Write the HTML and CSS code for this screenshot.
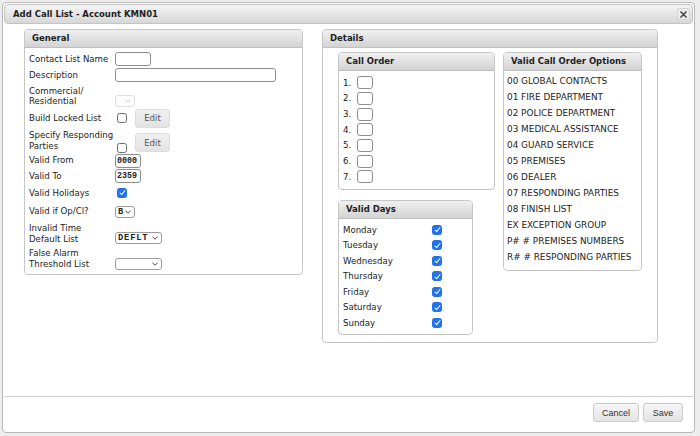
FILE: index.html
```html
<!DOCTYPE html>
<html>
    <head>
        <title>Add Call List - Account KMN01</title>
        <meta charset="UTF-8">
        <link rel="stylesheet" href="styles.css">
    </head>
    <body>
        <div class="dialog">
            <div class="titlebar">
                <span class="title">Add Call List - Account KMN01</span>
                <button type="button" class="close">
                    <svg width="7" height="7" viewBox="0 0 7 7"><path d="M1 1L6 6M6 1L1 6" stroke="#4a4a4a" stroke-width="1.7" stroke-linecap="round"/></svg>
                </button>
            </div>

            <div class="dialog-body">
                <!-- General -->
                <div class="panel general">
                    <div class="panel-head">General</div>
                    <div class="form">
                        <div class="row">
                            <label>Contact List Name</label>
                            <input type="text" class="txt w-name">
                        </div>
                        <div class="row">
                            <label>Description</label>
                            <input type="text" class="txt w-desc">
                        </div>
                        <div class="row two">
                            <label class="lh10">Commercial/<br>Residential</label>
                            <span class="select w-small disabled bottom1">
                                <select disabled><option></option></select>
                                <svg class="chev" width="6" height="4" viewBox="0 0 6 4"><path d="M0.5 0.8L3 3.2L5.5 0.8" fill="none" stroke="#c4c4c4" stroke-width="0.9"/></svg>
                            </span>
                        </div>
                        <div class="row btn-row">
                            <label>Build Locked List</label>
                            <input type="checkbox" class="check up">
                            <button type="button" class="edit">Edit</button>
                        </div>
                        <div class="row two">
                            <label>Specify Responding<br>Parties</label>
                            <input type="checkbox" class="check bottom2">
                            <button type="button" class="edit bottom1">Edit</button>
                        </div>
                        <div class="row short">
                            <label>Valid From</label>
                            <input type="text" class="txt mono w-time" value="0000">
                        </div>
                        <div class="row">
                            <label>Valid To</label>
                            <input type="text" class="txt mono w-time" value="2359">
                        </div>
                        <div class="row h18">
                            <label>Valid Holidays</label>
                            <input type="checkbox" class="check" checked>
                        </div>
                        <div class="row h19">
                            <label>Valid if Op/Cl?</label>
                            <span class="select w-small">
                                <select><option>B</option></select>
                                <svg class="chev" width="6" height="4" viewBox="0 0 6 4"><path d="M0.5 0.8L3 3.2L5.5 0.8" fill="none" stroke="#333" stroke-width="0.9"/></svg>
                            </span>
                        </div>
                        <div class="row two">
                            <label>Invalid Time<br>Default List</label>
                            <span class="select w-list bottom2">
                                <select><option>DEFLT</option></select>
                                <svg class="chev" width="6" height="4" viewBox="0 0 6 4"><path d="M0.5 0.8L3 3.2L5.5 0.8" fill="none" stroke="#333" stroke-width="0.9"/></svg>
                            </span>
                        </div>
                        <div class="row two">
                            <label>False Alarm<br>Threshold List</label>
                            <span class="select w-list bottom1">
                                <select><option></option></select>
                                <svg class="chev" width="6" height="4" viewBox="0 0 6 4"><path d="M0.5 0.8L3 3.2L5.5 0.8" fill="none" stroke="#333" stroke-width="0.9"/></svg>
                            </span>
                        </div>
                    </div>
                </div>

                <!-- Details -->
                <div class="panel details">
                    <div class="panel-head">Details</div>
                    <div class="details-body">
                        <div class="col">
                            <div class="panel call-order">
                                <div class="panel-head">Call Order</div>
                                <ol class="order-list">
                                    <li><span class="num">1.</span><input type="text" class="slot"></li>
                                    <li><span class="num">2.</span><input type="text" class="slot"></li>
                                    <li><span class="num">3.</span><input type="text" class="slot"></li>
                                    <li><span class="num">4.</span><input type="text" class="slot"></li>
                                    <li><span class="num">5.</span><input type="text" class="slot"></li>
                                    <li><span class="num">6.</span><input type="text" class="slot"></li>
                                    <li><span class="num">7.</span><input type="text" class="slot"></li>
                                </ol>
                            </div>
                            <div class="panel valid-days">
                                <div class="panel-head">Valid Days</div>
                                <div class="days">
                                    <label>Monday</label><input type="checkbox" class="check" checked>
                                    <label>Tuesday</label><input type="checkbox" class="check" checked>
                                    <label>Wednesday</label><input type="checkbox" class="check" checked>
                                    <label>Thursday</label><input type="checkbox" class="check" checked>
                                    <label>Friday</label><input type="checkbox" class="check" checked>
                                    <label>Saturday</label><input type="checkbox" class="check" checked>
                                    <label>Sunday</label><input type="checkbox" class="check" checked>
                                </div>
                            </div>
                        </div>
                        <div class="panel options">
                            <div class="panel-head">Valid Call Order Options</div>
                            <ul class="option-list">
                                <li>00 GLOBAL CONTACTS</li>
                                <li>01 FIRE DEPARTMENT</li>
                                <li>02 POLICE DEPARTMENT</li>
                                <li>03 MEDICAL ASSISTANCE</li>
                                <li>04 GUARD SERVICE</li>
                                <li>05 PREMISES</li>
                                <li>06 DEALER</li>
                                <li>07 RESPONDING PARTIES</li>
                                <li>08 FINISH LIST</li>
                                <li>EX EXCEPTION GROUP</li>
                                <li>P# # PREMISES NUMBERS</li>
                                <li>R# # RESPONDING PARTIES</li>
                            </ul>
                        </div>
                    </div>
                </div>
            </div>

            <div class="footer">
                <button type="button" class="action cancel">Cancel</button>
                <button type="button" class="action save">Save</button>
            </div>
        </div>
    </body>
</html>
```

FILE: styles.css
```css
body {
    margin: 0;
    background: #ededed;
    font-family: "DejaVu Sans", Verdana, sans-serif;
    font-size: 8.6px;
    color: #222;
}

.dialog {
    box-sizing: border-box;
    width: 693px;
    height: 431px;
    margin: 2px 0 0 2px;
    padding: 1px;
    border: 1px solid #b8b8b8;
    border-radius: 4px;
    background: #fff;
    display: flex;
    flex-direction: column;
}

.titlebar {
    box-sizing: border-box;
    height: 20px;
    padding: 0 2px 0 8px;
    border: 1px solid #c4c4c4;
    border-radius: 4px;
    background: linear-gradient(#f4f4f4, #d7d7d7);
    display: flex;
    align-items: center;
    justify-content: space-between;
}

.title {
    font-weight: bold;
    font-size: 8.5px;
    color: #1e1e1e;
}

.close {
    width: 13px;
    height: 12px;
    padding: 0;
    border: 1px solid #d4d4d4;
    border-radius: 2px;
    background: #ececec;
    display: flex;
    align-items: center;
    justify-content: center;
}

.dialog-body {
    flex: 1;
    display: flex;
    align-items: flex-start;
    gap: 19px;
    padding: 5px 0 0 20px;
}

/* panels */
.panel {
    box-sizing: border-box;
    border: 1px solid #c6c6c6;
    border-radius: 4px;
    background: #fff;
}

.panel-head {
    box-sizing: border-box;
    height: 18px;
    line-height: 17px;
    padding-left: 7px;
    border-bottom: 1px solid #c0c0c0;
    border-radius: 3px 3px 0 0;
    background: linear-gradient(#f0f0f0, #d3d3d3);
    font-weight: bold;
    font-size: 8.5px;
    color: #1e1e1e;
}

.general {
    width: 279px;
}

.details {
    width: 336px;
}

/* general form */
.form {
    padding: 3px 0 3px 4px;
}

.row {
    height: 16px;
    display: flex;
    align-items: center;
}

.row label {
    flex: none;
    width: 86px;
    line-height: 11px;
}

.row label.lh10 {
    line-height: 10px;
}

.row.two {
    height: 25px;
}

.row.two .select,
.row.two .check,
.row.two .edit {
    align-self: flex-end;
}

.row.btn-row {
    height: 20px;
}

.row.short {
    height: 15px;
}

.row.h18 {
    height: 18px;
}

.row.h19 {
    height: 19px;
}

.bottom1 {
    margin-bottom: 1px;
}

.bottom2 {
    margin-bottom: 2px;
}

.up {
    margin-bottom: 3px;
}

.txt {
    box-sizing: border-box;
    height: 14px;
    margin: 0;
    padding: 0 2px;
    border: 1px solid #8e8e8e;
    border-radius: 3px;
    background: #fff;
    outline: none;
}

.w-name {
    width: 36px;
}

.w-desc {
    width: 161px;
}

.w-time {
    width: 26px;
}

.mono {
    font-family: "Liberation Mono", "DejaVu Sans Mono", monospace;
    font-weight: bold;
    font-size: 8.4px;
    color: #222;
    padding: 0 1px;
}

.check {
    appearance: none;
    box-sizing: border-box;
    position: relative;
    width: 10px;
    height: 10px;
    margin: 0 0 0 2px;
    border: 1px solid #6d6d6d;
    border-radius: 2.5px;
    background: #fff;
}

.check:checked {
    border-color: #1f6fe6;
    background: #2473ea;
}

.check:checked::after {
    content: "";
    position: absolute;
    left: 2.6px;
    top: 0.4px;
    width: 2.4px;
    height: 5px;
    border: solid #fff;
    border-width: 0 1.5px 1.5px 0;
    transform: rotate(40deg);
}

.edit {
    box-sizing: border-box;
    width: 35px;
    height: 19px;
    margin-left: 8px;
    padding: 0;
    border: 1px solid #dcdcdc;
    border-radius: 3px;
    background: linear-gradient(#f0f0f0, #e3e3e3);
    font-family: "DejaVu Sans", Verdana, sans-serif;
    font-size: 8.6px;
    color: #555;
}

.select {
    box-sizing: border-box;
    position: relative;
    height: 12px;
    border: 1px solid #9c9c9c;
    border-radius: 3px;
    background: #fff;
    display: flex;
}

.select select {
    appearance: none;
    width: 100%;
    height: 100%;
    margin: 0;
    padding: 0 0 0 2px;
    border: none;
    background: transparent;
    font-family: "Liberation Mono", "DejaVu Sans Mono", monospace;
    font-weight: bold;
    font-size: 8.8px;
    letter-spacing: 0.8px;
    line-height: 10px;
    color: #222;
}

.select .chev {
    position: absolute;
    right: 3px;
    top: 3px;
}

.select.disabled {
    border-color: #dedede;
}

.w-small {
    width: 20px;
}

.w-list {
    width: 47px;
}

/* details */
.details-body {
    display: flex;
    align-items: flex-start;
    gap: 8px;
    padding: 4px 15px 7px;
}

.col {
    width: 157px;
    display: flex;
    flex-direction: column;
    gap: 10px;
}

.call-order {
    width: 157px;
}

.order-list {
    margin: 0;
    padding: 4px 0 4px 4px;
    list-style: none;
}

.order-list li {
    height: 15.67px;
    display: flex;
    align-items: center;
}

.num {
    width: 14px;
}

.slot {
    box-sizing: border-box;
    width: 16px;
    height: 13px;
    margin: 0;
    padding: 0;
    border: 1px solid #8e8e8e;
    border-radius: 3px;
    outline: none;
}

.valid-days {
    width: 135px;
}

.days {
    display: grid;
    grid-template-columns: 87px auto;
    grid-auto-rows: 15.5px;
    align-items: center;
    justify-items: start;
    padding: 3.5px 0 3px 4px;
}

.options {
    width: 139px;
}

.option-list {
    margin: 0;
    padding: 2px 0 5px 3px;
    list-style: none;
    font-size: 8.9px;
    line-height: 16px;
}

/* footer */
.footer {
    box-sizing: border-box;
    height: 35px;
    padding: 6px 10px 0 0;
    border-top: 1px solid #cfcfcf;
    display: flex;
    justify-content: flex-end;
    align-items: flex-start;
    gap: 4px;
}

.action {
    box-sizing: border-box;
    height: 19px;
    padding: 0;
    border: 1px solid #cacaca;
    border-radius: 3px;
    background: linear-gradient(#f6f6f6, #e3e3e3);
    font-family: "Liberation Sans", Arial, sans-serif;
    font-size: 9px;
    color: #333;
}

.cancel {
    width: 46px;
}

.save {
    width: 40px;
}
```
